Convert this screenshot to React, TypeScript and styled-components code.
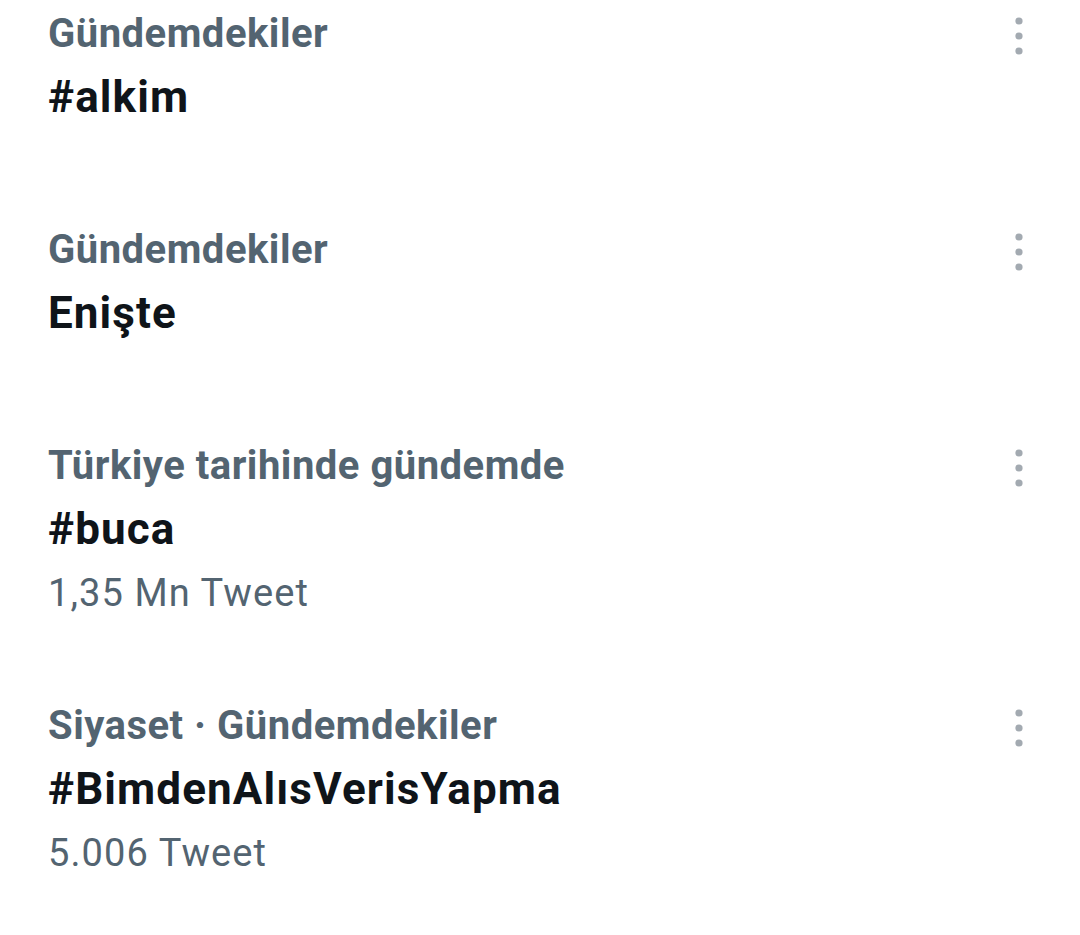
import styled, { createGlobalStyle } from 'styled-components';

const GlobalStyle = createGlobalStyle`
    html, body {
        margin: 0;
        padding: 0;
        background: #ffffff;
    }
    body {
        font-family: Roboto, "Noto Sans", "Liberation Sans", sans-serif;
        -webkit-font-smoothing: antialiased;
    }
`;

const TrendList = styled.ul`
    list-style: none;
    margin: 0;
    padding: 2px 0 0 0;
    width: 1080px;
    min-height: 933px;
    background: #ffffff;
`;

const TrendItem = styled.li<{ $hasCount: boolean }>`
    display: flex;
    align-items: flex-start;
    padding: 0 51px ${({ $hasCount }) => ($hasCount ? '68px' : '90px')} 48px;
`;

const TrendBody = styled.div`
    flex: 1;
    display: flex;
    flex-direction: column;
    min-width: 0;
`;

const Context = styled.span`
    font-size: 40px;
    line-height: 64px;
    font-weight: 700;
    letter-spacing: 0.5px;
    color: #536471;
    white-space: nowrap;
`;

const Topic = styled.span`
    font-size: 44px;
    line-height: 62px;
    font-weight: 700;
    letter-spacing: 1.1px;
    color: #0f1419;
    white-space: nowrap;
`;

const TweetCount = styled.span`
    font-size: 38px;
    line-height: 66px;
    font-weight: 400;
    letter-spacing: 1.1px;
    color: #536471;
`;

const MoreButton = styled.button`
    display: flex;
    align-items: center;
    justify-content: center;
    width: 20px;
    height: 48px;
    margin-top: 10px;
    padding: 0;
    border: none;
    background: transparent;
    cursor: pointer;
`;

interface Trend {
    context: string;
    topic: string;
    count?: string;
}

const trends: Trend[] = [
    { context: 'Gündemdekiler', topic: '#alkim' },
    { context: 'Gündemdekiler', topic: 'Enişte' },
    { context: 'Türkiye tarihinde gündemde', topic: '#buca', count: '1,35 Mn Tweet' },
    { context: 'Siyaset · Gündemdekiler', topic: '#BimdenAlısVerisYapma', count: '5.006 Tweet' },
];

const MoreIcon = () => (
    <svg width="20" height="48" viewBox="0 0 20 48" aria-hidden="true">
        <circle cx="10" cy="9" r="3.6" fill="#a3aab1" />
        <circle cx="10" cy="24" r="3.6" fill="#a3aab1" />
        <circle cx="10" cy="39" r="3.6" fill="#a3aab1" />
    </svg>
);

const App = () => (
    <>
        <GlobalStyle />
        <TrendList>
            {trends.map((trend) => (
                <TrendItem key={trend.topic} $hasCount={!!trend.count}>
                    <TrendBody>
                        <Context>{trend.context}</Context>
                        <Topic>{trend.topic}</Topic>
                        {trend.count && <TweetCount>{trend.count}</TweetCount>}
                    </TrendBody>
                    <MoreButton aria-label="Diğer">
                        <MoreIcon />
                    </MoreButton>
                </TrendItem>
            ))}
        </TrendList>
    </>
);

export default App;
